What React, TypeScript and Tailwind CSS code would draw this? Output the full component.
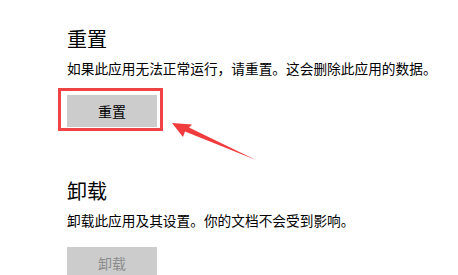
import React from "react";

const font = { fontFamily: '"Microsoft YaHei", "Noto Sans CJK SC", sans-serif' };

function Section({ title, desc, button, disabled, className }: { title: string; desc: string; button: string; disabled?: boolean; className?: string }) {
	return (
		<div className={className}>
			<div className="text-[20px] leading-[28px] text-black">{title}</div>
			<div className="mt-[5px] text-[13.7px] leading-[20px] text-black">{desc}</div>
			<div
				className={
					"mt-[17px] flex h-[32px] w-[90px] items-center justify-center bg-[#cccccc] text-[14px] " +
					(disabled ? "text-[#8c8c8c]" : "text-black")
				}
			>
				{button}
			</div>
		</div>
	);
}

export default function App() {
	return (
		<div className="relative h-[275px] w-[458px] overflow-hidden bg-white pl-[67px] pt-[25px]" style={font}>
			<Section title="重置" desc="如果此应用无法正常运行，请重置。这会删除此应用的数据。" button="重置" />
			<Section
				className="mt-[50px]"
				title="卸载"
				desc="卸载此应用及其设置。你的文档不会受到影响。"
				button="卸载"
				disabled
			/>
			{/* red highlight box */}
			<div className="absolute left-[58px] top-[88px] h-[43px] w-[105px] border-[3px] border-[#f04444]" />
			{/* red arrow */}
			<svg className="absolute left-0 top-0" width="458" height="275" viewBox="0 0 458 275">
				<polygon points="172,123 192,124.5 189,127.5 256,160 185,131.5 183,137" fill="#f03c3c" />
			</svg>
		</div>
	);
}
